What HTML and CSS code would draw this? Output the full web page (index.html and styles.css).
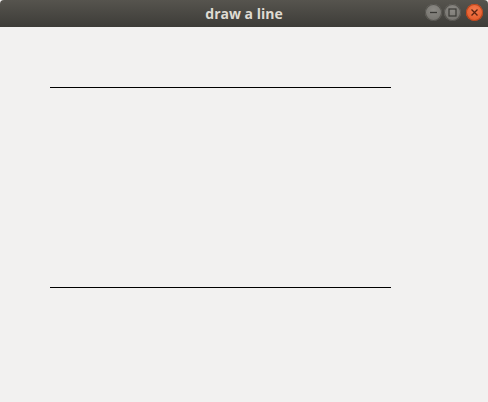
FILE: index.html
```html
<!DOCTYPE html>
<html>
<head>
<meta charset="utf-8">
<link rel="stylesheet" href="styles.css">
</head>
<body>
<div class="window">
  <div class="titlebar">
    <span class="title">draw a line</span>
    <div class="controls">
      <span class="btn btn-min"><svg width="9" height="9" viewBox="0 0 9 9"><path d="M1 4.5h7" stroke="#3a3935" stroke-width="1.3"/></svg></span>
      <span class="btn btn-max"><svg width="9" height="9" viewBox="0 0 9 9"><rect x="1" y="1" width="7" height="7" fill="none" stroke="#3a3935" stroke-width="1.2"/></svg></span>
      <span class="btn btn-close"><svg width="9" height="9" viewBox="0 0 9 9"><path d="M1.5 1.5l6 6M7.5 1.5l-6 6" stroke="#5a2310" stroke-width="1.3"/></svg></span>
    </div>
  </div>
  <div class="canvas">
    <div class="line line-top"></div>
    <div class="line line-bottom"></div>
  </div>
</div>
</body>
</html>
```
FILE: styles.css
```css
html, body {
  margin: 0;
  padding: 0;
  width: 488px;
  height: 402px;
  overflow: hidden;
  background: #f2f1f0;
}
.window {
  display: flex;
  flex-direction: column;
  width: 488px;
  height: 402px;
}
.titlebar {
  height: 27px;
  flex: none;
  background: linear-gradient(#56544e, #3d3c38);
  display: flex;
  align-items: center;
  justify-content: center;
  position: relative;
  border-radius: 4px 4px 0 0;
}
.title {
  font-family: "Open Sans", "DejaVu Sans", sans-serif;
  font-weight: bold;
  font-size: 14px;
  color: #dfdbd2;
  letter-spacing: 0;
}
.controls {
  position: absolute;
  right: 5px;
  top: 4px;
  display: flex;
  gap: 2px;
}
.btn {
  width: 17px;
  height: 17px;
  border-radius: 50%;
  display: flex;
  align-items: center;
  justify-content: center;
}
.btn-min, .btn-max {
  background: radial-gradient(circle at 50% 35%, #8c8a85, #6f6d68);
  box-shadow: inset 0 0 0 1px #55534e;
}
.btn-close {
  margin-left: 3px;
  background: radial-gradient(circle at 50% 35%, #f27a4e, #e0521f);
  box-shadow: inset 0 0 0 1px #b6441c;
}
.canvas {
  flex: 1;
  background: #f2f1f0;
  padding: 60px 0 0 50px;
}
.line {
  width: 341px;
  height: 1px;
  background: #000;
}
.line-bottom {
  margin-top: 199px;
}
```
